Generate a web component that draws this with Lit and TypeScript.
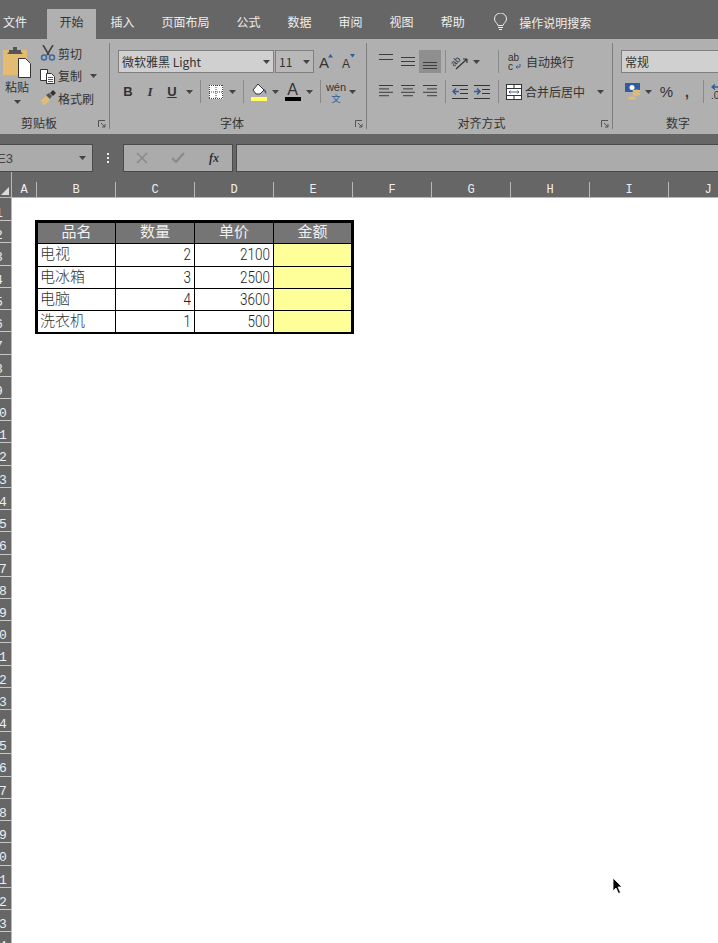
import { LitElement, html, css, svg } from "lit";
import { customElement } from "lit/decorators.js";

const caret = html`<svg width="7" height="4" viewBox="0 0 7 4"><path d="M0 0h7L3.500 4z" fill="#444"/></svg>`;

const lines = (ys: number[]) => html`<svg width="16" height="18" viewBox="0 0 16 18">
  ${ys.map((y) => svg`<rect x="1" y=${y} width="14" height="1" fill="#3d3d3d"/>`)}
</svg>`;

// horizontal text lines for the align buttons, x/width given per line
const para = (rows: [number, number][]) => html`<svg width="16" height="16" viewBox="0 0 16 16">
  ${rows.map(([x, w], i) => svg`<rect x=${x} y=${1 + i * 3.4} width=${w} height="1" fill="#3d3d3d"/>`)}
</svg>`;

const icons = {
  paste: html`<svg width="30" height="31" viewBox="0 0 30 31">
    <path d="M1 3h24v25H1z" fill="#e3bb73"/>
    <path d="M7 5V3h4V0h4v3h4v2l2 2H5z" fill="#555"/>
    <path d="M16.500 11.500h7l5 5V30.500h-12z" fill="#fff" stroke="#333"/>
  </svg>`,
  scissors: html`<svg width="16" height="16" viewBox="0 0 16 16">
    <path d="M3 0l6 10M13 0L7 10" stroke="#444" stroke-width="1.600" fill="none"/>
    <circle cx="4" cy="12.500" r="2.500" stroke="#3a6aa5" stroke-width="1.500" fill="none"/>
    <circle cx="12" cy="12.500" r="2.500" stroke="#3a6aa5" stroke-width="1.500" fill="none"/>
  </svg>`,
  copy: html`<svg width="16" height="16" viewBox="0 0 16 16">
    <path d="M.5 1.500h7v11h-7z" fill="#fff" stroke="#333"/>
    <path d="M6.500 5.500h5l3 3v7h-8z" fill="#fff" stroke="#333"/>
    <path d="M8 9.500h5M8 11.500h5M8 13.500h5" stroke="#3a5f8f"/>
  </svg>`,
  painter: html`<svg width="16" height="16" viewBox="0 0 16 16">
    <path d="M0 11l6-5 4 4-5 5-3-1 1-2z" fill="#e3bb73"/>
    <path d="M6 5l3-2 3 3-2 3z" fill="#555"/>
    <path d="M10 3l3-3 3 3-3 3z" fill="#333"/>
  </svg>`,
  borders: html`<svg width="14" height="14" viewBox="0 0 14 14">
    <rect width="14" height="14" fill="#fff"/>
    <path d="M.5 0v14M7 0v14M13.500 0v14M0 .5h14M0 7h14M0 13.500h14" stroke="#444" stroke-dasharray="1 1"/>
  </svg>`,
  fill: html`<svg width="17" height="18" viewBox="0 0 17 18">
    <path d="M2 7l5-6 6 6-4 4H5z" fill="#fff" stroke="#333"/>
    <path d="M13 6c2 1 3 3 2 5-1-1-2-2-2-5z" fill="#3a5f8f"/>
    <rect y="14" width="16" height="4" fill="#ffff66"/>
  </svg>`,
  wrap: html`<svg width="14" height="18" viewBox="0 0 14 18">
    <text x="0" y="8" font-size="10" font-family="Liberation Sans, sans-serif" fill="#333">ab</text>
    <text x="0" y="17" font-size="10" font-family="Liberation Sans, sans-serif" fill="#333">c</text>
    <path d="M12 11v3H8M9.500 12.500L8 14l1.500 1.500" stroke="#3a5f8f" fill="none"/>
  </svg>`,
  merge: html`<svg width="16" height="16" viewBox="0 0 16 16">
    <rect x=".5" y=".5" width="15" height="15" fill="#fff" stroke="#333"/>
    <path d="M0 4.500h16M0 11.500h16M8 .5v4M8 11.500v4" stroke="#333"/>
    <path d="M3 8h10M4.500 6.500L3 8l1.500 1.500M11.500 6.500L13 8l-1.500 1.500" stroke="#3a5f8f" fill="none"/>
  </svg>`,
  orient: html`<svg width="18" height="16" viewBox="0 0 18 16">
    <path d="M5 15L16 5M16 5h-4M16 5v4" stroke="#333" stroke-width="1.200" fill="none"/>
    <text x="0" y="10" font-size="9" font-family="Liberation Sans, sans-serif" fill="#333" transform="rotate(-45 5 8)">ab</text>
  </svg>`,
  outdent: html`<svg width="17" height="14" viewBox="0 0 17 14">
    <path d="M0 .5h16M8 4.500h8M8 8.500h8M0 13.500h16" stroke="#333"/>
    <path d="M7 6.500H1M4 3.500L1 6.500l3 3" stroke="#2f5c9a" stroke-width="1.500" fill="none"/>
  </svg>`,
  indent: html`<svg width="17" height="14" viewBox="0 0 17 14">
    <path d="M0 .5h16M8 4.500h8M8 8.500h8M0 13.500h16" stroke="#333"/>
    <path d="M0 6.500h6M3 3.500l3 3-3 3" stroke="#2f5c9a" stroke-width="1.500" fill="none"/>
  </svg>`,
  currency: html`<svg width="16" height="17" viewBox="0 0 16 17">
    <rect y="0" width="15" height="9" fill="#2f5c9a"/>
    <circle cx="7" cy="4.500" r="2.500" fill="#fff"/>
    <ellipse cx="11.500" cy="8" rx="4" ry="1.500" fill="#e3bb73"/>
    <ellipse cx="11.500" cy="11" rx="4" ry="1.500" fill="#e3bb73"/>
    <ellipse cx="7" cy="15" rx="4" ry="1.500" fill="#e3bb73"/>
  </svg>`,
  decimal: html`<svg width="16" height="16" viewBox="0 0 16 16">
    <path d="M8 3H1M4 .5L1 3l3 2.500" stroke="#2f5c9a" stroke-width="1.400" fill="none"/>
    <text x="0" y="15" font-size="10" font-family="Liberation Sans, sans-serif" fill="#333">.0</text>
  </svg>`,
  launcher: html`<svg width="8" height="8" viewBox="0 0 8 8">
    <path d="M.5 7V.5H7" stroke="#555" fill="none"/><path d="M3 3l4 4M7 4v3H4" stroke="#555" fill="none"/>
  </svg>`,
  bulb: html`<svg width="13" height="18" viewBox="0 0 13 18">
    <path d="M4 12.500C3 9.500 .5 9 .5 6a6 6 0 0 1 12 0c0 3-2.500 3.500-3.500 6.500z" fill="none" stroke="#eee"/>
    <path d="M4 14.500h5M5 16.500h3" stroke="#eee"/>
  </svg>`,
  cursor: html`<svg width="12" height="18" viewBox="0 0 12 18">
    <path d="M1 1v13l3-3 2.500 5.500 2-1L6 10h4z" fill="#000" stroke="#fff" stroke-width=".8"/>
  </svg>`,
};

const TABS = ["开始", "插入", "页面布局", "公式", "数据", "审阅", "视图", "帮助"];
const COLS = ["B", "C", "D", "E", "F", "G", "H", "I", "J", "K"];
const TABLE = [
  ["电视", "2", "2100"],
  ["电冰箱", "3", "2500"],
  ["电脑", "4", "3600"],
  ["洗衣机", "1", "500"],
];

@customElement("app-root")
export class AppRoot extends LitElement {
  static styles = css`
    :host {
      display: block;
      position: relative;
      width: 718px;
      height: 943px;
      overflow: hidden;
      background: #fff;
      font-family: "Noto Sans CJK SC", "Liberation Sans", sans-serif;
      font-size: 12px;
      color: #333;
    }
    .tabs {
      display: flex;
      gap: 2px;
      height: 30px;
      padding-top: 9px;
      background: #666;
      color: #eee;
    }
    .tab {
      padding: 0 12.5px;
      line-height: 26px;
      white-space: nowrap;
    }
    .tab.file { padding: 0 0 0 3px; margin-right: 18px; }
    .tab.on { background: #b0b0b0; color: #333; }
    .search { display: flex; align-items: center; gap: 12px; margin-left: 15px; padding-bottom: 4px; }

    .ribbon {
      display: flex;
      height: 95px;
      padding-top: 4px;
      box-sizing: border-box;
      background: #b0b0b0;
      overflow: hidden;
    }
    .group {
      position: relative;
      display: flex;
      flex-direction: column;
      flex: none;
      height: 86px;
      border-right: 1px solid #7d7d7d;
    }
    .g-clip { width: 109px; }
    .g-font { width: 256px; }
    .g-align { width: 245px; }
    .g-num { width: 130px; border: 0; }
    .body { flex: 1; min-height: 0; }
    .label { height: 14px; line-height: 15px; text-align: center; white-space: nowrap; }
    .g-clip .label { width: 78px; }
    .g-font .label { padding-right: 12px; }
    .g-align .label { padding-right: 16px; }
    .launcher { position: absolute; right: 3px; bottom: 1px; display: flex; }

    .g-clip .body { display: flex; }
    .paste { display: flex; flex-direction: column; align-items: center; width: 34px; padding-top: 4px; box-sizing: border-box; }
    .paste span { font-size: 12px; line-height: 14px; margin-top: 2px; }
    .paste svg:last-child { margin-top: 6px; }
    .clip-list { margin: -1px 0 0 6px; }
    .clip-row { display: flex; align-items: center; gap: 2px; height: 22.500px; white-space: nowrap; }
    .clip-row .i { display: flex; width: 16px; }
    .clip-row svg.c { margin-left: 6px; }

    .row { display: grid; align-items: center; justify-items: center; justify-content: start; }
    .row > * { grid-row: 1; }
    .row1 { height: 23px; margin-top: 7px; }
    .row2 { height: 23px; margin-top: 7px; }
    .sep { width: 1px; height: 23px; background: #8a8a8a; }
    .sel {
      display: flex;
      align-items: center;
      justify-content: space-between;
      height: 23px;
      box-sizing: border-box;
      width: 100%;
      padding: 0 3px;
      background: #d0d0d0;
      border: 1px solid #7f7f7f;
      white-space: nowrap;
    }
    .g-font .row1 { grid-template-columns: 156px 40px 5px 15px 7px 15px; padding-left: 8px; }
    .s-size { background: #b8b8b8; width: 39px; justify-self: end; }
    .g-font .row2 {
      grid-template-columns: 22px 22px 22px 12px 10px 21px 12px 10px 22px 11px 23px 11px 10px 22px 11px;
      padding-left: 7px;
    }
    .b { font: bold 13px "Liberation Sans", sans-serif; }
    .it { font: italic bold 13px "Liberation Serif", serif; }
    .un { font: bold 13px "Liberation Sans", sans-serif; text-decoration: underline; }
    .fcolor { display: flex; flex-direction: column; align-items: center; font: 16px/14px "Liberation Sans", sans-serif; }
    .fcolor i { display: block; width: 16px; height: 4px; background: #000; }
    .wen { display: flex; flex-direction: column; align-items: center; font: 11px/12px "Liberation Sans", sans-serif; }
    .wen b { font: 9.500px/10px "Noto Sans CJK SC", sans-serif; color: #2f5c9a; }

    .g-align .row1 { grid-template-columns: 22px 22px 22px 8px 22px 10px 12px 10px auto; margin-left: 8px; }
    .g-align .row2 { grid-template-columns: 22px 22px 22px 8px 22px 22px 10px auto; margin-left: 8px; }
    .hl { background: #8f8f8f; width: 22px; height: 23px; display: flex; align-items: center; justify-content: center; }
    .wide { display: flex; align-items: center; justify-self: start; white-space: nowrap; }
    .wide svg.c { margin-left: 9px; }
    .row1 .wide { margin-left: 5px; gap: 4px; }
    .row2 .wide { margin-left: 3px; gap: 3px; }

    .g-num .row1 { grid-template-columns: 110px; padding-left: 8px; }
    .g-num .row2 { grid-template-columns: 23px 8px 6px 17px 5px 14px 9px 1px 7px 16px; padding-left: 8px; }
    .pct { font: 15px "Liberation Sans", sans-serif; }
    .comma { font: bold 14px "Liberation Sans", sans-serif; }

    .fbar {
      display: flex;
      align-items: stretch;
      height: 38px;
      padding: 10px 0 0;
      box-sizing: border-box;
      background: #666;
    }
    .name {
      display: flex;
      align-items: center;
      justify-content: space-between;
      width: 94px;
      margin-left: -1px;
      padding: 0 6px 0 0;
      box-sizing: border-box;
      height: 28px;
      background: #ababab;
      border: 1px solid #4a4a4a;
      color: #444;
      font: 13px "Liberation Sans", sans-serif;
    }
    .name span { margin-left: -3px; }
    .dots { width: 30px; display: flex; flex-direction: column; align-items: center; justify-content: center; gap: 2px; }
    .dots i { display: block; width: 2px; height: 2px; background: #eee; }
    .fbtns {
      display: flex;
      align-items: center;
      width: 110px;
      height: 28px;
      box-sizing: border-box;
      background: #ababab;
      border: 1px solid #4a4a4a;
    }
    .fbtns > * { flex: 1; text-align: center; display: flex; justify-content: center; }
    .fx { font: italic bold 12px "Liberation Serif", serif; color: #333; }
    .finput { flex: 1; margin-left: 3px; height: 28px; box-sizing: border-box; background: #ababab; border: 1px solid #4a4a4a; border-right: 0; }

    .colhead {
      display: flex;
      height: 26px;
      box-sizing: border-box;
      background: #666;
      border-bottom: 1px solid #b8b8b8;
    }
    .corner {
      width: 12px;
      flex: none;
      display: flex;
      align-items: flex-end;
      padding: 0 0 2px 1px;
      box-sizing: border-box;
      border-right: 1px solid #b8b8b8;
    }
    .col {
      flex: none;
      width: 79px;
      align-self: flex-end;
      height: 15px;
      box-sizing: border-box;
      border-right: 1px solid #b8b8b8;
      color: #eee;
      font: 12px/16px "Liberation Mono", monospace;
      text-align: center;
    }
    .col.a { width: 25px; }

    .sheet { display: flex; }
    .rows {
      flex: none;
      width: 12px;
      height: 746px;
      overflow: hidden;
      background: #666;
      border-right: 1px solid #b8b8b8;
      box-sizing: border-box;
      padding-top: 1px;
    }
    .rownum {
      width: 24px;
      margin-left: -13px;
      height: 22.220px;
      padding-top: 8px;
      overflow: hidden;
      box-sizing: border-box;
      border-bottom: 1px solid #c8c8c8;
      color: #eee;
      font: 13px/14px "Liberation Mono", monospace;
      text-align: center;
    }
    .table {
      display: grid;
      grid-template-columns: 77px 78px 78px 77px;
      grid-template-rows: 20px 22px 21px 21px 21px;
      gap: 1px;
      align-self: flex-start;
      margin: 22px 0 0 23px;
      border: 3px solid #000;
      border-bottom-width: 2px;
      background: #000;
    }
    .th {
      background: #757575;
      color: #f0f0f0;
      font-size: 15px;
      line-height: 16px;
      text-align: center;
    }
    .td {
      background: #fff;
      color: #333;
      font-size: 15px;
      font-weight: 300;
      line-height: 18px;
      padding: 0 2px;
      white-space: nowrap;
    }
    .td.n { text-align: right; padding-right: 3px; color: #222; font: 300 13.500px/20px Roboto, sans-serif; }
    .td.n span { display: inline-block; transform: scaleY(1.22); }
    .td.y { background: #ffff99; }
    .cursor { position: absolute; left: 612px; top: 877px; display: flex; }
  `;

  renderClipboard() {
    return html`<div class="group g-clip">
      <div class="body">
        <div class="paste">${icons.paste}<span>粘贴</span>${caret}</div>
        <div class="clip-list">
          <div class="clip-row"><span class="i">${icons.scissors}</span>剪切</div>
          <div class="clip-row"><span class="i">${icons.copy}</span>复制<svg class="c" width="7" height="4" viewBox="0 0 7 4"><path d="M0 0h7L3.500 4z" fill="#444"/></svg></div>
          <div class="clip-row"><span class="i">${icons.painter}</span>格式刷</div>
        </div>
      </div>
      <div class="label">剪贴板</div>
      <span class="launcher">${icons.launcher}</span>
    </div>`;
  }

  renderFont() {
    return html`<div class="group g-font">
      <div class="body">
        <div class="row row1">
          <div class="sel"><span>微软雅黑 Light</span>${caret}</div>
          <div class="sel s-size"><span>11</span>${caret}</div>
          <span></span>
          <svg width="15" height="15" viewBox="0 0 15 15"><text x="0" y="14" font-size="15" font-family="Liberation Sans, sans-serif" fill="#333">A</text><path d="M9 3.500L11.500 0 14 3.500z" fill="#2f5c9a"/></svg>
          <span></span>
          <svg width="15" height="15" viewBox="0 0 15 15"><text x="1" y="14" font-size="12" font-family="Liberation Sans, sans-serif" fill="#333">A</text><path d="M9 0l2.500 3.500L14 0z" fill="#2f5c9a"/></svg>
        </div>
        <div class="row row2">
          <span class="b">B</span><span class="it">I</span><span class="un">U</span>${caret}
          <span class="sep"></span>
          ${icons.borders}${caret}
          <span class="sep"></span>
          ${icons.fill}${caret}
          <span class="fcolor">A<i></i></span>${caret}
          <span class="sep"></span>
          <span class="wen">wén<b>文</b></span>${caret}
        </div>
      </div>
      <div class="label">字体</div>
      <span class="launcher">${icons.launcher}</span>
    </div>`;
  }

  renderAlign() {
    const left = para([[1, 14], [1, 10], [1, 14], [1, 10]]);
    const center = para([[1, 14], [3, 10], [1, 14], [3, 10]]);
    const right = para([[1, 14], [5, 10], [1, 14], [5, 10]]);
    return html`<div class="group g-align">
      <div class="body">
        <div class="row row1">
          ${lines([1, 6])}${lines([4, 8, 12])}<span class="hl">${lines([9, 12, 15])}</span>
          <span class="sep"></span>
          ${icons.orient}${caret}
          <span></span>
          <span class="sep"></span>
          <div class="wide">${icons.wrap}自动换行</div>
        </div>
        <div class="row row2">
          ${left}${center}${right}
          <span class="sep"></span>
          ${icons.outdent}${icons.indent}
          <span class="sep"></span>
          <div class="wide">${icons.merge}合并后居中<svg class="c" width="7" height="4" viewBox="0 0 7 4"><path d="M0 0h7L3.500 4z" fill="#444"/></svg></div>
        </div>
      </div>
      <div class="label">对齐方式</div>
      <span class="launcher">${icons.launcher}</span>
    </div>`;
  }

  renderNumber() {
    return html`<div class="group g-num">
      <div class="body">
        <div class="row row1"><div class="sel"><span>常规</span></div></div>
        <div class="row row2">
          ${icons.currency}${caret}<span></span>
          <span class="pct">%</span>
          <span></span>
          <span class="comma">,</span>
          <span></span>
          <span class="sep"></span>
          <span></span>
          ${icons.decimal}
        </div>
      </div>
      <div class="label">数字</div>
    </div>`;
  }

  render() {
    const rowNums = Array.from({ length: 34 }, (_, i) => i + 1);
    return html`
      <div class="tabs">
        <div class="tab file">文件</div>
        ${TABS.map((t) => html`<div class="tab ${t === "开始" ? "on" : ""}">${t}</div>`)}
        <div class="search">${icons.bulb}<span>操作说明搜索</span></div>
      </div>
      <div class="ribbon">
        ${this.renderClipboard()}${this.renderFont()}${this.renderAlign()}${this.renderNumber()}
      </div>
      <div class="fbar">
        <div class="name"><span>E3</span>${caret}</div>
        <div class="dots"><i></i><i></i><i></i></div>
        <div class="fbtns">
          <span><svg width="12" height="12" viewBox="0 0 12 12"><path d="M1 1l10 10M11 1L1 11" stroke="#8a8a8a" stroke-width="1.600"/></svg></span>
          <span><svg width="14" height="12" viewBox="0 0 14 12"><path d="M1 6l4 4 8-9" stroke="#8a8a8a" stroke-width="2.200" fill="none"/></svg></span>
          <span class="fx">fx</span>
        </div>
        <div class="finput"></div>
      </div>
      <div class="colhead">
        <div class="corner"><svg width="8" height="8" viewBox="0 0 8 8"><path d="M8 0v8H0z" fill="#ddd"/></svg></div>
        <div class="col a">A</div>
        ${COLS.map((c) => html`<div class="col">${c}</div>`)}
      </div>
      <div class="sheet">
        <div class="rows">${rowNums.map((n) => html`<div class="rownum">${n}</div>`)}</div>
        <div class="table">
          ${["品名", "数量", "单价", "金额"].map((h) => html`<div class="th">${h}</div>`)}
          ${TABLE.map(
            (r) => html`<div class="td">${r[0]}</div>
              <div class="td n"><span>${r[1]}</span></div>
              <div class="td n"><span>${r[2]}</span></div>
              <div class="td y"></div>`
          )}
        </div>
      </div>
      <span class="cursor">${icons.cursor}</span>
    `;
  }
}
